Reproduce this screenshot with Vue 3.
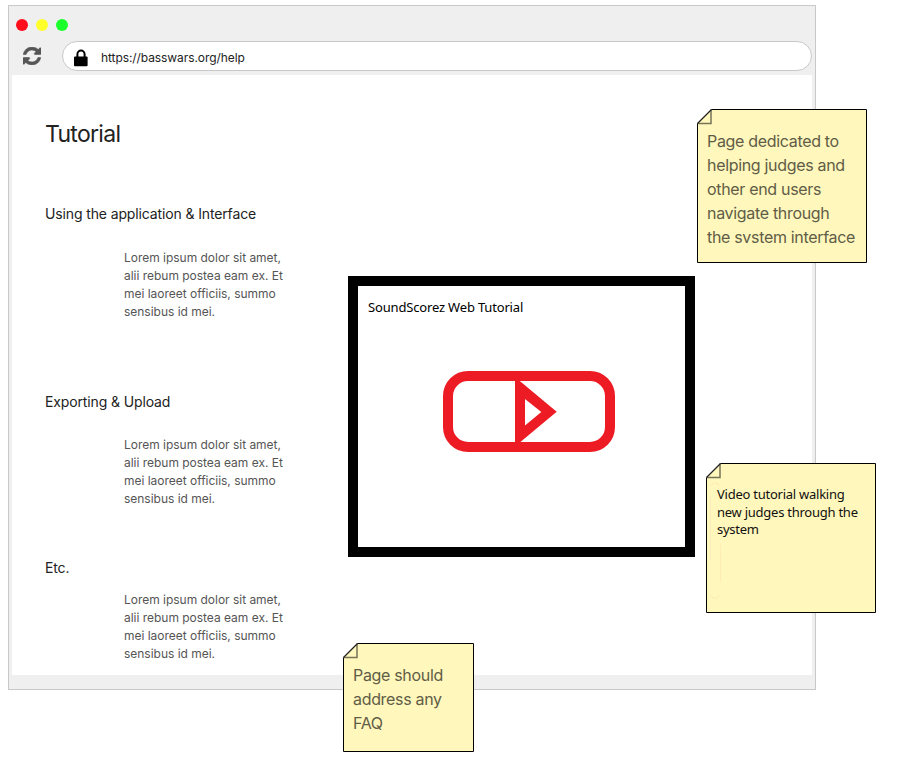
<script setup>
const lorem = ['Lorem ipsum dolor sit amet,', 'alii rebum postea eam ex. Et', 'mei laoreet officiis, summo', 'sensibus id mei.']
const topics = [
  { key: 'using', title: 'Using the application & Interface' },
  { key: 'export', title: 'Exporting & Upload' },
  { key: 'etc', title: 'Etc.' },
]
const notes = [
  { key: 'purpose', w: 170, h: 154, lines: ['Page dedicated to', 'helping judges and', 'other end users', 'navigate through', 'the system interface'] },
  { key: 'walkthrough', w: 170, h: 150, lines: ['Video tutorial walking', 'new judges through the', 'system'] },
  { key: 'faq', w: 131, h: 109, lines: ['Page should', 'address any', 'FAQ'] },
]
const outline = (n) => `M14.5 .5H${n.w - 0.5}V${n.h - 0.5}H.5V14.5Z`
</script>

<template>
  <main class="canvas">
    <section class="browser">
      <header class="chrome">
        <div class="dots">
          <span class="dot red"></span>
          <span class="dot yellow"></span>
          <span class="dot green"></span>
        </div>
        <div class="toolbar">
          <svg class="refresh" viewBox="0 0 1536 1536" width="18" height="18">
            <path fill="#555" stroke="#555" stroke-width="50" d="M1511 928q0 5-1 7-64 268-268 434.500T764 1536q-146 0-282.500-55T238 1324l-129 129q-19 19-45 19t-45-19-19-45V960q0-26 19-45t45-19h448q26 0 45 19t19 45-19 45l-137 137q71 66 161 102t187 36q134 0 250-65t186-179q11-17 53-117 8-23 30-23h192q13 0 22.500 9.500t9.500 22.500zm25-800v448q0 26-19 45t-45 19h-448q-26 0-45-19t-19-45 19-45l138-138Q969 256 768 256q-134 0-250 65T332 500q-11 17-53 117-8 23-30 23H50q-13 0-22.500-9.500T18 608v-7q65-268 270-434.500T768 0q146 0 284 55.500T1297 212l130-129q19-19 45-19t45 19 19 45z" />
          </svg>
          <div class="address">
            <svg class="lock" viewBox="0 0 14 18" width="14" height="18">
              <path d="M3.400 9V5.200a3.600 3.600 0 0 1 7.200 0V9" fill="none" stroke="#000" stroke-width="2" />
              <rect x="0" y="7.600" width="13.600" height="9.600" rx="1" />
            </svg>
            <span class="url">https://basswars.org/help</span>
          </div>
        </div>
      </header>
      <div class="page">
        <h1>Tutorial</h1>
        <div class="columns">
          <div class="topics">
            <article v-for="t in topics" :key="t.key" class="topic" :class="t.key">
              <h2>{{ t.title }}</h2>
              <p><span v-for="line in lorem" :key="line" class="line">{{ line }}</span></p>
            </article>
          </div>
          <figure class="video">
            <figcaption>SoundScorez Web Tutorial</figcaption>
            <svg class="play" viewBox="0 0 172 81" width="172" height="81">
              <rect x="5" y="5" width="162" height="71" rx="20" fill="none" stroke="#ed1c24" stroke-width="10" />
              <path fill="#ed1c24" fill-rule="evenodd" d="M72 6L113.700 40.800L72 75.500ZM82 28V54.500L98.300 41Z" />
            </svg>
          </figure>
        </div>
      </div>
    </section>

    <aside v-for="n in notes" :key="n.key" class="note" :class="n.key">
      <svg class="paper" :viewBox="`0 0 ${n.w} ${n.h}`" :width="n.w" :height="n.h">
        <path :d="outline(n)" fill="#fff7bb" stroke="#000" stroke-linejoin="round" />
        <path d="M.5 14.500H14V.5" fill="none" stroke="#77745a" stroke-width="1.500" />
        <path d="M.5 14.500L14.500 .5" stroke="#222" stroke-width="1.200" />
        <path v-if="n.key === 'walkthrough'" d="M14.500 82V119M4.500 32V97M5 132l2 3h4l2-3M5 23l2-3h4l2 3" fill="none" stroke="#fdecb5" stroke-width="1" />
      </svg>
      <div class="text"><span v-for="line in n.lines" :key="line" class="line">{{ line }}</span></div>
    </aside>
  </main>
</template>

<style>
body {
  margin: 0;
  background: #fff;
}
</style>

<style scoped>
.canvas {
  position: relative;
  box-sizing: border-box;
  width: 906px;
  height: 767px;
  padding: 5px 0 0 8px;
  overflow: hidden;
  font-family: Inter, Roboto, sans-serif;
}
.browser {
  box-sizing: border-box;
  width: 808px;
  height: 685px;
  padding: 0 3px 14px;
  border: 1px solid #c8c8c8;
  background: #efefef;
}
.chrome {
  display: flex;
  flex-direction: column;
  height: 69px;
}
.dots {
  display: flex;
  gap: 8px;
  padding: 13px 0 0 4px;
}
.dot {
  width: 12px;
  height: 12px;
  border-radius: 50%;
}
.red { background: #ff0d1b; }
.yellow { background: #ffff2b; }
.green { background: #1bff2b; }
.toolbar {
  display: flex;
  align-items: center;
  gap: 21px;
  margin-top: 10px;
  padding-left: 11px;
}
.address {
  display: flex;
  flex: 1;
  align-items: center;
  box-sizing: border-box;
  height: 30px;
  padding-left: 11px;
  border: 1px solid #c8c8c8;
  border-radius: 15px;
  background: #fff;
}
.lock {
  margin-top: 3px;
}
.url {
  margin: 3px 0 0 13px;
  font-size: 12px;
  line-height: 18px;
  letter-spacing: -0.08px;
  color: #222;
}
.page {
  box-sizing: border-box;
  height: 600px;
  padding: 44px 0 0 33px;
  overflow: hidden;
  background: #fff;
}
h1 {
  margin: 0;
  font-size: 23px;
  font-weight: 400;
  line-height: 30px;
  letter-spacing: -0.7px;
  color: #222;
}
.columns {
  display: flex;
  margin-top: 55px;
}
.topics {
  width: 303px;
}
.topic {
  height: 188px;
}
.topic.export {
  height: 166px;
}
h2 {
  margin: 0;
  font-size: 14px;
  font-weight: 400;
  line-height: 20px;
  letter-spacing: -0.13px;
  color: #222;
}
.topic p {
  margin: 25px 0 0 79px;
  font-size: 12px;
  line-height: 18px;
  letter-spacing: -0.02px;
  color: #555;
}
.topic.export p { margin-top: 24px; }
.topic.etc p { margin-top: 13px; }
.line {
  display: block;
  white-space: nowrap;
}
.video {
  display: flex;
  flex-direction: column;
  box-sizing: border-box;
  width: 347px;
  height: 281px;
  margin: 72px 0 0;
  padding: 12px 10px;
  border: 10px solid #000;
  font-family: "Noto Sans", "Open Sans", sans-serif;
}
figcaption {
  font-size: 13px;
  line-height: 18px;
  letter-spacing: -0.17px;
  color: #000;
}
.play {
  margin: 55px 0 0 75px;
}
.note {
  position: absolute;
}
.note.purpose { left: 697px; top: 109px; }
.note.walkthrough { left: 706px; top: 463px; }
.note.faq { left: 343px; top: 643px; }
.paper {
  display: block;
}
.text {
  position: absolute;
  left: 10px;
  top: 20px;
  font-size: 16px;
  line-height: 24px;
  letter-spacing: -0.32px;
  color: #5f5d47;
}
.note.purpose .text {
  height: 114px;
  overflow: hidden;
}
.note.walkthrough .text {
  left: 11px;
  top: 23px;
  font-family: "Noto Sans", "Open Sans", sans-serif;
  font-size: 13px;
  line-height: 17.500px;
  letter-spacing: -0.25px;
  color: #111;
}
</style>
